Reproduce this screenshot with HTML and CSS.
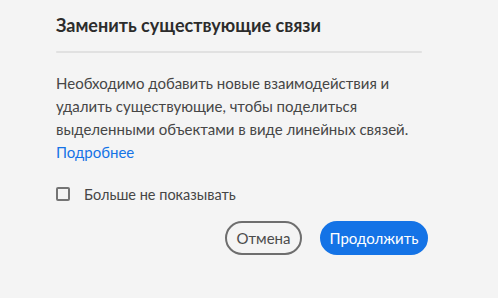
FILE: index.html
```html
<!DOCTYPE html>
<html lang="ru">
<head>
<meta charset="utf-8">
<link rel="stylesheet" href="styles.css">
</head>
<body>
<div class="dialog">
  <h1 class="title">Заменить существующие связи</h1>
  <div class="divider"></div>
  <p class="body">Необходимо добавить новые взаимодействия и<br>удалить существующие, чтобы поделиться<br>выделенными объектами в виде линейных связей.<br><a class="link" href="#">Подробнее</a></p>
  <label class="check"><span class="box"></span><span class="check-label">Больше не показывать</span></label>
  <div class="buttons">
    <button class="btn btn-secondary">Отмена</button>
    <button class="btn btn-primary">Продолжить</button>
  </div>
</div>
</body>
</html>
```
FILE: styles.css
```css
html, body {
  margin: 0;
  padding: 0;
  background: #f4f4f4;
}
body {
  width: 498px;
  height: 298px;
  overflow: hidden;
  font-family: "Lato", "Noto Sans", sans-serif;
}
.dialog {
  padding: 13px 0 0 56px;
  width: 372px;
}
.title {
  margin: 0;
  font-size: 18px;
  font-weight: 700;
  line-height: 24px;
  color: #2c2c2c;
}
.divider {
  margin-top: 14px;
  width: 366px;
  height: 2px;
  background: #e1e1e1;
  border-radius: 1px;
}
.body {
  margin: 19px 0 0 0;
  font-size: 15px;
  line-height: 23px;
  color: #464646;
  white-space: nowrap;
}
.link {
  color: #1473e6;
  text-decoration: none;
}
.check {
  display: flex;
  align-items: center;
  margin-top: 21px;
  height: 18px;
}
.box {
  width: 10px;
  height: 10px;
  border: 2px solid #747474;
  border-radius: 2px;
}
.check-label {
  margin-left: 14px;
  font-size: 14.5px;
  color: #464646;
}
.buttons {
  display: flex;
  justify-content: flex-end;
  gap: 18px;
  margin-top: 18px;
}
.btn {
  height: 34px;
  border-radius: 17px;
  font-family: "Lato", "Noto Sans", sans-serif;
  font-size: 15px;
  padding: 0;
}
.btn-secondary {
  background: transparent;
  border: 2px solid #6e6e6e;
  color: #4b4b4b;
  width: 77px;
}
.btn-primary {
  background: #1473e6;
  border: 2px solid #1473e6;
  color: #fff;
  width: 108px;
}
```
